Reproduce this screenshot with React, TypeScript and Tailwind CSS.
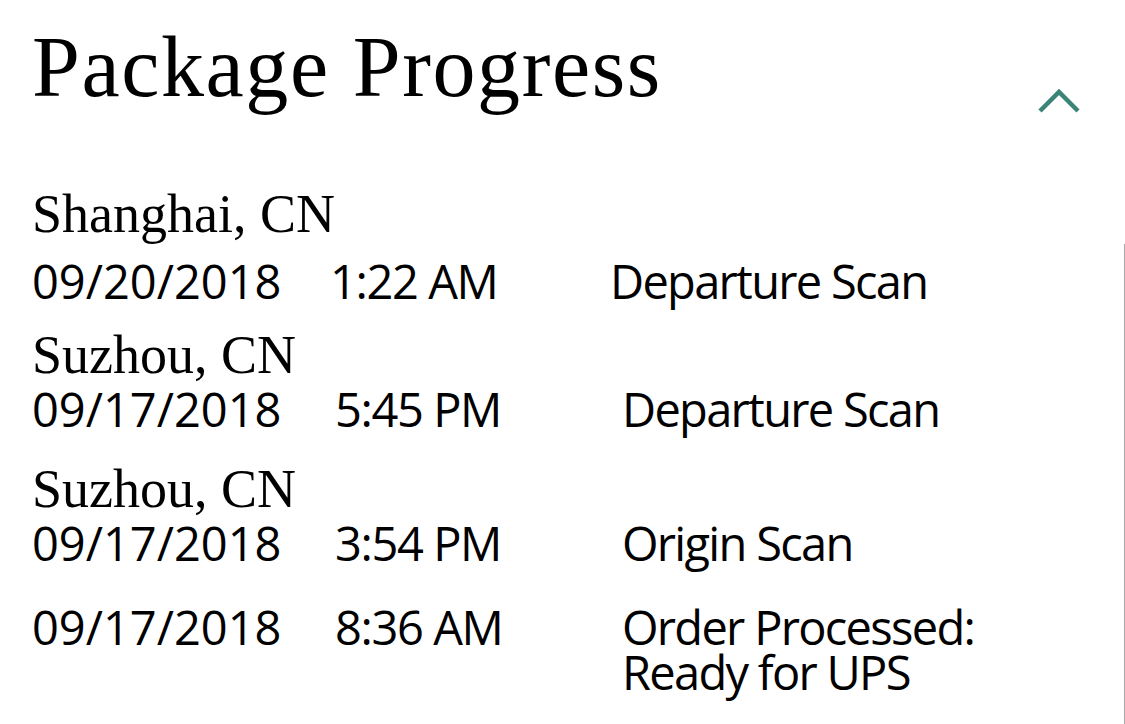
const serif = { fontFamily: '"Liberation Serif", "Times New Roman", serif' };

export default function App() {
  return (
    <div className="w-[1125px] h-[724px] overflow-hidden bg-white text-black">
      {/* Header */}
      <div className="flex justify-between items-start pl-[32px] pr-[43px]">
        <h1
          className="mt-[24px] text-[86px] leading-none font-normal tracking-[1.6px]"
          style={serif}
        >
          Package Progress
        </h1>
        <svg width="46" height="28" viewBox="0 0 46 28" className="mt-[87px]">
          <polyline
            points="4,24 23,5 42,24"
            fill="none"
            stroke="#3a8478"
            strokeWidth="4.5"
          />
        </svg>
      </div>

      {/* Shanghai */}
      <div className="pl-[32px] mt-[72px] h-[57px]">
        <div className="text-[54px] leading-none" style={serif}>Shanghai, CN</div>
      </div>

      {/* Scan list with the thin scroll rule on the right */}
      <div className="border-r border-[#a8a8a8] h-[484px] pl-[32px] pt-[14px] font-['Open_Sans',sans-serif] text-[47px] leading-none">
        <div className="flex">
          <span className="w-[298px]">09/20/2018</span>
          <span className="w-[280px] tracking-[-1.4px]">1:22 AM</span>
          <span className="tracking-[-1.7px]">Departure Scan</span>
        </div>

        <div className="mt-[23px] text-[54px] leading-none" style={serif}>Suzhou, CN</div>
        <div className="flex mt-[4px]">
          <span className="w-[303px]">09/17/2018</span>
          <span className="w-[287px] tracking-[-1.4px]">5:45 PM</span>
          <span className="tracking-[-1.7px]">Departure Scan</span>
        </div>

        <div className="mt-[29px] text-[54px] leading-none" style={serif}>Suzhou, CN</div>
        <div className="flex mt-[4px]">
          <span className="w-[303px]">09/17/2018</span>
          <span className="w-[287px] tracking-[-1.4px]">3:54 PM</span>
          <span className="tracking-[-1.7px]">Origin Scan</span>
        </div>

        <div className="flex mt-[37px]">
          <span className="w-[303px]">09/17/2018</span>
          <span className="w-[287px] tracking-[-1.4px]">8:36 AM</span>
          <div className="flex flex-col tracking-[-1.7px]">
            <span>Order Processed:</span>
            <span className="mt-[-2px]">Ready for UPS</span>
          </div>
        </div>
      </div>
    </div>
  );
}
